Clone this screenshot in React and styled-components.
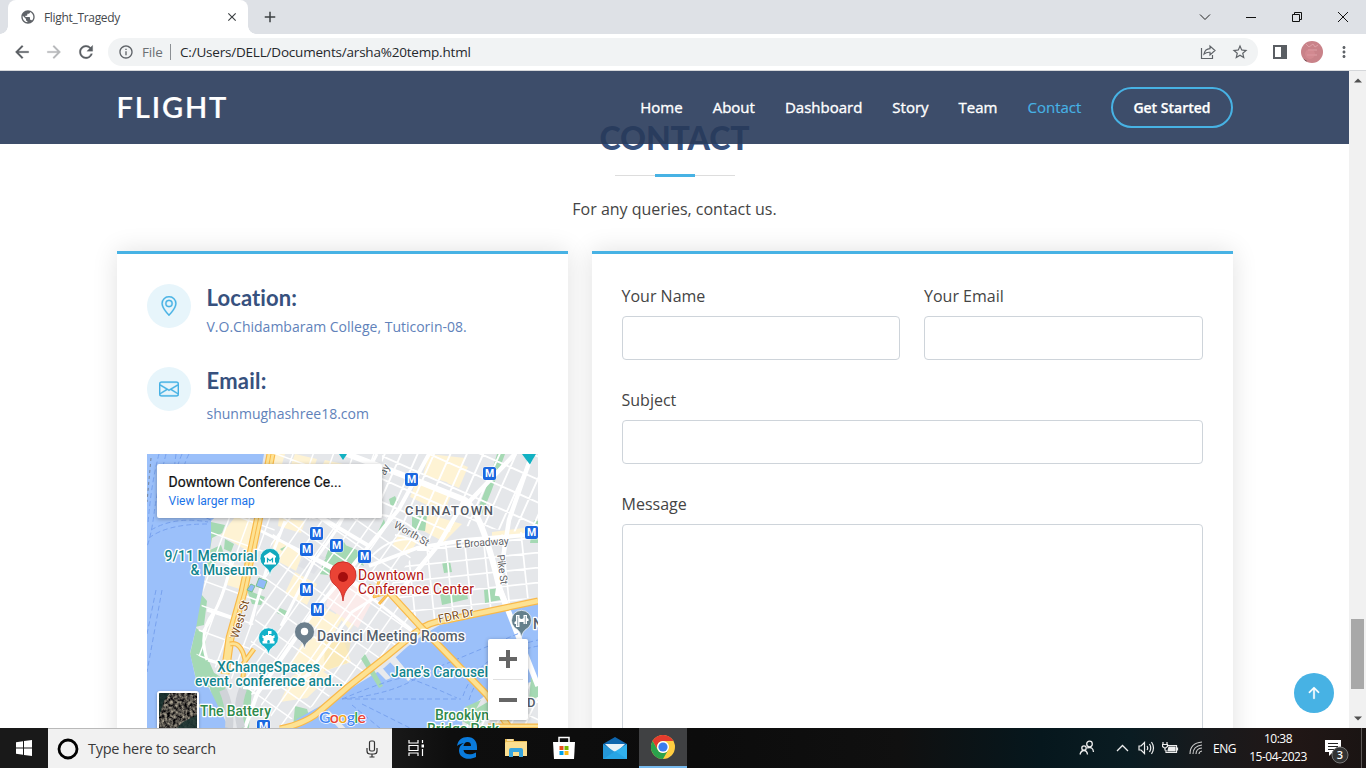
import React from "react";
import styled, { createGlobalStyle } from "styled-components";
import { MdArrowBack, MdArrowForward, MdRefresh, MdPublic, MdStarBorder, MdMoreVert, MdInfoOutline, MdClose, MdAdd } from "react-icons/md";
import { BsGeoAlt, BsEnvelope, BsArrowUpShort } from "react-icons/bs";

const Global = createGlobalStyle`
  * { box-sizing: border-box; }
  body { margin: 0; width: 1366px; height: 768px; overflow: hidden; background: #fff; color: #444; font-family: "Open Sans", "Liberation Sans", sans-serif; }
  svg { display: block; flex: none; }
  h2, h4, p { margin: 0; }
`;

const Screen = styled.div`
  width: 1366px; height: 768px; display: flex; flex-direction: column; overflow: hidden;
`;

/* Browser frame */
const TabStrip = styled.div`
  height: 34px; flex: none; background: #dee1e6; display: flex; align-items: center; padding-left: 8px; color: #3c4043;
`;
const Tab = styled.div`
  position: relative; width: 240px; height: 34px; background: #fff; border-radius: 8px 8px 0 0;
  display: flex; align-items: center; padding: 0 9px 0 12px; font-size: 12px; color: #45494d;
  &::before, &::after { content: ""; position: absolute; bottom: 0; width: 8px; height: 8px; }
  &::before { left: -8px; background: radial-gradient(circle at 0 0, #dee1e6 7.5px, #fff 8px); }
  &::after { right: -8px; background: radial-gradient(circle at 100% 0, #dee1e6 7.5px, #fff 8px); }
`;
const TabTitle = styled.span`
  flex: 1; margin-left: 8px; letter-spacing: -0.32px; white-space: nowrap;
`;
const NewTab = styled.div` margin-left: 13px; `;
const WindowControls = styled.div`
  margin-left: auto; height: 28px; display: flex; align-items: center;
`;
const WindowButton = styled.div`
  width: 46px; display: flex; justify-content: center;
`;
const Toolbar = styled.div`
  height: 37px; flex: none; display: flex; align-items: center; background: #fff; border-bottom: 1px solid #d5d7da; color: #5f6368; padding-left: 12px;
`;
const ToolButton = styled.div`
  width: 32px; color: ${(p) => (p.$faded ? "#b6b8ba" : "#5a5e63")};
  path:not([fill="none"]) { stroke: currentColor; stroke-width: 0.3px; }
`;
const AddressBar = styled.div`
  width: 1150px; height: 28px; border-radius: 14px; background: #f1f3f4; display: flex; align-items: center; padding: 0 9px 0 10px; font-size: 14px; white-space: nowrap;
`;
const Scheme = styled.span`
  margin-left: 8px; width: 28px; padding-right: 8px; color: #6b6f73; letter-spacing: -0.2px; font-size: 13.5px;
`;
const Url = styled.span`
  margin-left: 0; padding-left: 9px; border-left: 1px solid #8c9094; line-height: 16px; color: #25282c; letter-spacing: ${(p) => p.$tracking}px; font-size: 13.5px;
`;
const AddressActions = styled.div`
  margin-left: auto; display: flex; gap: 14px; align-items: center;
`;
const ToolbarEnd = styled.div`
  flex: 1; display: flex; align-items: center; padding-left: 15px;
`;
const Avatar = styled.div`
  width: 22px; height: 22px; margin: 0 12px 0 14px; border-radius: 50%; overflow: hidden;
`;

/* Web page */
const Viewport = styled.div`
  height: 657px; flex: none; display: flex; overflow: hidden; position: relative;
`;
const Page = styled.div`
  width: 1349px; height: 657px; overflow: hidden; background: #fff; padding: 47.6px 116.5px 0;
`;
const SiteHeader = styled.header`
  position: absolute; z-index: 2; left: 0; top: 0; width: 1349px; height: 73px; padding: 0 116.5px;
  display: flex; align-items: center; justify-content: space-between; background: rgba(40, 58, 90, 0.9);
`;
const Logo = styled.div`
  font-family: Lato, sans-serif; font-size: 29px; font-weight: 600; letter-spacing: 1.9px; color: #fff; line-height: 36px; padding-bottom: 2px; -webkit-text-stroke: 0.2px #fff;
`;
const Nav = styled.nav`
  display: flex; align-items: center; gap: 30px;
`;
const NavLink = styled.span`
  font-size: 15px; font-weight: 400; line-height: 20px; padding-bottom: 2px; color: ${(p) => (p.$active ? "#47b2e4" : "#fff")};
  -webkit-text-stroke: ${(p) => (p.$active ? 0.15 : 0.35)}px currentColor;
`;
const GetStarted = styled.span`
  height: 41px; padding: 0 20px; border: 2px solid #47b2e4; border-radius: 50px; color: #fff; font-size: 14px; font-weight: 600; letter-spacing: 0; line-height: 37px; -webkit-text-stroke: 0.25px #fff;
`;
const SectionTitle = styled.div`
  text-align: center; padding-bottom: 30px;
`;
const Heading = styled.h2`
  position: relative; font-family: Lato, sans-serif; font-size: 32px; font-weight: 900; line-height: 38.4px; color: #37517e; letter-spacing: -0.1px; padding-bottom: 20px; margin-bottom: 20px;
  &::before, &::after { content: ""; position: absolute; }
  &::before { width: 120px; height: 1px; background: #ddd; bottom: 1px; left: calc(50% - 60px); }
  &::after { width: 40px; height: 3px; background: #47b2e4; bottom: 0; left: calc(50% - 20px); }
`;
const Intro = styled.p` font-size: 16px; line-height: 24px; `;
const Columns = styled.div`
  display: grid; grid-template-columns: 451px 641px; gap: 24px;
`;
const Card = styled.div`
  height: 560px; padding: 30px; background: #fff; border-top: 3px solid #47b2e4; box-shadow: 0 0 24px rgba(0, 0, 0, 0.12);
`;
const InfoItem = styled.div`
  display: flex; gap: 16px; height: ${(p) => p.$height}px;
`;
const InfoIcon = styled.div`
  width: 44px; height: 44px; border-radius: 50%; background: #e7f5fb; color: #47b2e4; display: flex; align-items: center; justify-content: center;
  path { stroke: currentColor; stroke-width: 0.25px; }
`;
const InfoTitle = styled.h4`
  font-family: Lato, sans-serif; font-size: 22px; font-weight: 700; line-height: 26.4px; padding-top: 1px; color: #37517e; letter-spacing: ${(p) => p.$tracking}px;
`;
const InfoText = styled.p`
  margin-top: ${(p) => p.$top}px; font-size: 14px; line-height: 21px; color: #6182ba;
`;
const Form = styled.div` display: flex; flex-direction: column; gap: 28px; `;
const FieldRow = styled.div` display: grid; grid-template-columns: 1fr 1fr; gap: 24px; `;
const Field = styled.label` display: block; font-size: 16px; line-height: 24px; `;
const Input = styled.div`
  height: ${(p) => p.$height || 44}px; margin-top: 8px; border: 1px solid #ced4da; border-radius: 4px; background: #fff;
`;
const BackToTop = styled.div`
  position: absolute; z-index: 3; left: 1294px; top: 602px; width: 40px; height: 40px; border-radius: 50%; background: #47b2e4; color: #fff; display: flex; align-items: center; justify-content: center;
  path { stroke: currentColor; stroke-width: 0.2px; }
`;
const Scrollbar = styled.div`
  width: 17px; height: 657px; background: #f1f1f1; display: flex; flex-direction: column; align-items: center; justify-content: space-between; padding: 7px 0 7px;
`;
const ScrollThumb = styled.div` width: 13px; height: 70px; margin-top: 536px; background: #a8a8a8; `;
const ScrollEnds = styled.div` flex: 1; display: flex; align-items: flex-end; `;

/* Map */
const MapFrame = styled.div`
  position: relative; width: 391px; height: 290px; overflow: hidden; background: #e8eaed;
`;
const PlaceCard = styled.div`
  position: absolute; left: 10px; top: 10px; width: 225px; height: 54px; padding: 9px 12px; background: #fff; border-radius: 2px; box-shadow: 0 1px 4px rgba(0, 0, 0, 0.3); font-family: Roboto, sans-serif;
`;
const PlaceName = styled.div` font-size: 14px; font-weight: 400; line-height: 19px; color: #111; white-space: nowrap; letter-spacing: ${(p) => p.$tracking}px; -webkit-text-stroke: 0.2px #111; `;
const PlaceLink = styled.div` font-size: 12px; line-height: 18px; color: #1a73e8; `;
const ZoomControl = styled.div`
  position: absolute; left: 341px; top: 185px; width: 40px; height: 81px; background: #fff; border-radius: 2px; box-shadow: 0 1px 4px rgba(0, 0, 0, 0.3); display: flex; flex-direction: column; align-items: center;
`;
const ZoomButton = styled.div` height: 40px; display: flex; align-items: center; `;
const ZoomDivider = styled.div` width: 30px; height: 1px; background: #e0e0e0; `;
const Satellite = styled.div`
  position: absolute; left: 10px; top: 237px; width: 42px; height: 42px; border: 2px solid #fff; border-radius: 3px; overflow: hidden; box-shadow: 0 1px 3px rgba(0, 0, 0, 0.3);
`;

const halo = { stroke: "#fff", strokeWidth: 2.6, paintOrder: "stroke", strokeLinejoin: "round" };
function MapLabel({ x, y, w, color, size = 14, anchor, rotate, weight = 500, soft, children }) {
  return (
    <text x={x} y={y} fill={color} fontFamily="Roboto, sans-serif" fontSize={size} fontWeight={weight} textAnchor={anchor}
      textLength={w} transform={rotate ? `rotate(${rotate} ${x} ${y})` : undefined} {...halo} strokeWidth={soft ? 1.6 : 2.6}>
      {children}
    </text>
  );
}
function Metro({ x, y }) {
  return (
    <g transform={`translate(${x + 0.5} ${y + 0.5})`}>
      <rect x="-7" y="-7" width="14" height="14" rx="2" fill="#fff" opacity=".7" />
      <rect x="-6.5" y="-6.5" width="13" height="13" rx="2" fill="#1a67e0" />
      <text x="0" y="3.8" textAnchor="middle" fill="#fff" fontFamily="Roboto, sans-serif" fontWeight="700" fontSize="10.5">M</text>
    </g>
  );
}
function Pin({ x, y, color, children }) {
  return (
    <g transform={`translate(${x} ${y})`}>
      <path d="M0 17C-1 11-3.500 9.500-7 7A10 10 0 1 1 7 7C3.500 9.500 1 11 0 17Z" fill={color} stroke="#fff" strokeWidth=".7" />
      {children}
    </g>
  );
}
function Streets({ clip, angle, cx, cy, dx, dy, width = 2, extent = 200 }) {
  const lines = [];
  for (let t = -extent; t <= extent; t += dx) lines.push(`M${t} ${-extent}V${extent}`);
  for (let t = -extent; t <= extent; t += dy) lines.push(`M${-extent} ${t}H${extent}`);
  return (
    <g clipPath={`url(#${clip})`}>
      <path d={lines.join("")} transform={`translate(${cx} ${cy}) rotate(${angle})`} stroke="#fff" strokeWidth={width} fill="none" />
    </g>
  );
}
function Highway({ d, width = 7 }) {
  return (
    <g fill="none" strokeLinejoin="round">
      <path d={d} stroke="#f9b94a" strokeWidth={width} />
      <path d={d} stroke="#fde293" strokeWidth={width - 2.4} />
    </g>
  );
}

function CityMap() {
  const teal = "#12858e", green = "#2f8a4c", gray = "#55606c", brown = "#7a4a12", red = "#b31412";
  return (
    <svg width="391" height="290" viewBox="0 0 391 290">
      <defs>
        <clipPath id="north"><path d="M235 0H391V80L318 72L275 88L235 64Z" /></clipPath>
        <clipPath id="center"><path d="M130 60L235 60L275 88L240 136L273 174L193 236L133 272L95 230Z" /></clipPath>
        <clipPath id="west"><path d="M117 0H235V64L130 66L110 150L95 232L49 200L64 70Z" /></clipPath>
        <clipPath id="east"><path d="M275 90L391 76V142L293 166L273 170L240 136Z" /></clipPath>
        <clipPath id="brooklyn"><path d="M320 252L345 232L391 222V290H315Z" /></clipPath>
      </defs>
      <rect width="391" height="290" fill="#e5e7ea" />

      {/* commercial blocks */}
      <g fill="#fef3d4">
        <path d="M124 0h14l-7 24h-12zM148 0l22 5-5 15-22-7zM178 6l18 4-4 12-19-6zM282 0l36 4-12 26-30-9zM271 24l34 15-8 20-34-16zM280 60l35 10-18 18-24-13zM345 78l46-6v10l-46 4zM309 8l12 5-9 21-12-5z" />
        <path d="M88 63l24 3-8 33-30-18zM84 110l18 4-6 22-16-5zM132 64l26 3-4 12-23-7zM128 84l28 15-7 18-26-14zM148 118l22 12-10 21-22-12zM170 150l26 14-12 20-24-16zM158 184l36-6 10 30-40 14-24-6zM145 222l24-9 14 9-23 22-27 4zM200 142l16 16-13 18-14-16zM252 80l18 8-8 12-17-8z" />
      </g>
      <path d="M178 182l26 4-4 23-23 8z" fill="#f7e5ae" opacity=".65" />

      {/* parks and campuses */}
      <g fill="#a5d9b3">
        <path d="M350 0h8l-14 38-9 22-5-3 11-28zM265 62h15l-2 15-13-2zM242 45l6-3 3 6-7 5zM229 82l8-17 2 8-8 9zM196 90l14 6 7 16-18-8zM182 94l15-6 12 20-20 14-17-2zM295 108l8-1 2 11-8 1zM293 140l26-5 2 10-26 6zM337 136l16-2 5 11-20 4zM387 66l4 1v22h-8z" />
        <path d="M64 68l14 3-3 8-10 5-2 12 11-5 3 9-18 18-5-4zM78 85l9 5-3 8-7-3zM100 136l18 7-4 8-9-1zM133 154l9 4-3 5-9-4zM54 140l6 7-3 24-9 2zM49 174l10 7-1 17 13 30-11 6-11-9-6-25zM60 214l18 12 2 28-9 9-8-28zM96 232l9 1-3 41H90zM148 252l12 3 5 16-19 3zM133 95l6-3-4 5z" />
      </g>
      <path d="M188 112l38 34-15 28-32-22z" fill="#fbebea" />
      <path d="M163 96l16 8-12 16-16-8z" fill="#dfe1e6" />

      <Streets clip="north" angle={24} cx={300} cy={20} dx={15} dy={21} width={1.9} />
      <Streets clip="center" angle={35} cx={190} cy={150} dx={14} dy={20} width={1.5} />
      <Streets clip="west" angle={20} cx={100} cy={100} dx={19} dy={24} width={1.5} />
      <Streets clip="east" angle={-6} cx={330} cy={110} dx={19} dy={15} width={1.700} />
      <Streets clip="brooklyn" angle={25} cx={360} cy={260} dx={13} dy={16} width={1.700} />

      {/* main streets */}
      <g fill="none" stroke="#fff" strokeLinejoin="round">
        <path d="M200 0L253 20L318 46Q335 58 353 136" strokeWidth="6" />
        <path d="M353 136L391 232" strokeWidth="6" />
        <path d="M385 0L362 66L350 142M318 46L292 90L246 146M368 0L318 52" strokeWidth="4.500" />
        <path d="M391 80L318 86L270 94L222 112M282 0L252 55L222 92L198 121L165 160L110 240L98 274M222 92L170 61" strokeWidth="4" />
        <path d="M230 0L190 75L166 109L134 172M112 76L184 112L240 156L265 176M60 156L91 166M136 88L224 137M61 206L95 216M96 234H130L164 220" strokeWidth="3" />
        <path d="M56 178Q79 143 84 106M60 206Q51 178 67 158M138 67L119 117L103 171M155 228L205 158L240 136" strokeWidth="3" />
        <path d="M222 60Q260 60 278 88Q246 78 223 104M248 81Q266 83 283 98" strokeWidth="1.800" />
      </g>

      {/* harbor and river */}
      <path d="M0 0H117L112 29L83 49L64 67V88L55 140L49 174L43 199L49 226L62 234L82 274V290H0Z" fill="#9bc0fa" />
      <path d="M391 149L293 171L276 181L260 193L237 214L193 241L150 265L133 290H318L315 268L324 253L340 240L391 226Z" fill="#9bc0fa" />
      <path d="M246 200l20 24-5 3-20-21zM232 210l12 14-5 2-12-12z" fill="#e8eaed" />
      <path d="M218 200l18 32-4 2-18-29z" fill="#a5d9b3" />
      <path d="M318 253l16-7-12 22zM312 265l32-19 7 8-24 20zM384 224h7v19l-9 3zM342 238l12-4 6 10-14 4z" fill="#a5d9b3" />
      <path d="M353 136L391 232" stroke="#fff" strokeWidth="5.500" />
      <path d="M180 258L210 290" stroke="#e8eaed" strokeWidth="5" />
      <g fill="none" stroke="#78a2ef" strokeWidth="1" strokeDasharray="5 3">
        <path d="M12 0Q4 30 1 70M19 0Q10 36 7 60T-2 98M29 0L23 48L64 66M35 0Q18 40 38 53L70 62M42 0Q28 26 48 43L66 61M4 76Q28 62 61 68M2 84Q20 70 60 70M15 136L0 218M9 136L0 180" />
        <path d="M195 245Q250 222 260 224T310 244M195 245Q250 240 277 219L375 178M200 245H314M316 242Q330 200 391 186M322 246Q335 203 391 192M205 251L240 280M215 250L275 280" />
      </g>
      <path d="M4 4L0 48" stroke="#75849b" strokeWidth="1" strokeDasharray="3 3" fill="none" />

      {/* highways */}
      <path d="M76 236Q84 254 82 274M96 235Q89 252 94 274" fill="none" stroke="#d0d3d8" strokeWidth="8" />
      <Highway d="M124 0L111 67L96 138L83 184L78 220" width={9} />
      <path d="M124 0L111 67L96 138L83 184" fill="none" stroke="#f9b94a" strokeWidth="1" />
      <Highway d="M83 190Q94 187 98 206L95 231M96 210L107 195" width={5} />
      <Highway d="M133 275Q160 269 173 257L202 232L240 202L268 179Q280 168 300 166L391 147" />
      <Highway d="M240 136L273 172L340 241L368 282" />
      <Highway d="M341 272H391" width={5} />
      <Highway d="M222 131l18 10-8 9M232 127l-5 16 10-3" width={2.8} />

      {/* memorial pools */}
      <g fill="#91baf8" stroke="#7ac28f" strokeWidth="1"><path d="M112 124l8 3-3 8-8-3zM104 130l4 2-3 6-5-2z" /></g>

      <MapLabel x={110.500} y={107} w={93} anchor="end" color={teal}>9/11 Memorial</MapLabel>
      <MapLabel x={110.500} y={121} w={67} anchor="end" color={teal}>&amp; Museum</MapLabel>
      <MapLabel x={258} y={61} w={88} color="#535a64" size={13}>CHINATOWN</MapLabel>
      <MapLabel x={246} y={73} w={39} color="#5f6368" size={10.500} weight={400} rotate={30} soft>Worth St</MapLabel>
      <MapLabel x={309} y={94} w={53} color="#5f6368" size={10.500} weight={400} rotate={-4} soft>E Broadway</MapLabel>
      <MapLabel x={350} y={101} w={30} color="#5f6368" size={10.500} weight={400} rotate={83} soft>Pike St</MapLabel>
      <MapLabel x={238} y={22} color="#5f6368" size={10.500} weight={400} rotate={-62} soft>ay</MapLabel>
      <MapLabel x={91} y={185} w={39} color={brown} size={11.500} weight={400} rotate={-73} soft>West St</MapLabel>
      <MapLabel x={292} y={169} w={36} color={brown} size={11.500} weight={400} rotate={-12} soft>FDR Dr</MapLabel>
      <MapLabel x={70} y={218} w={103} color={teal}>XChangeSpaces</MapLabel>
      <MapLabel x={48} y={232} w={148} color={teal}>event, conference and...</MapLabel>
      <MapLabel x={170} y={187} w={148} color={gray}>Davinci Meeting Rooms</MapLabel>
      <MapLabel x={244} y={223} w={97} color={teal}>Jane's Carousel</MapLabel>
      <MapLabel x={53} y={262} w={71} color={green}>The Battery</MapLabel>
      <MapLabel x={288} y={266} w={54} color={green}>Brooklyn</MapLabel>
      <MapLabel x={280} y={280} w={72} color={green}>Bridge Park</MapLabel>
      <MapLabel x={386} y={175} color={gray}>N</MapLabel>
      <MapLabel x={380} y={253} color={gray} size={13}>D</MapLabel>

      {[[264, 25], [342, 19], [384, 78], [169, 79], [159, 95], [189, 91], [217, 102], [159, 135], [170, 155], [116, 272]].map(([x, y]) => (
        <Metro key={`${x}-${y}`} x={x} y={y} />
      ))}
      <path d="M192 0h8l-4 6zM375 0h14l-3 5-3 5.500-4-5z" fill="#12b1c2" />
      <Pin x={123} y={104.500} color="#12a9bd">
        <path d="M-6-2.500L0-6.500L6-2.500V-1H-6ZM-5-1h10v6H-5zM-6 4H6v2H-6z" fill="#fff" />
        <path d="M-2.500 4V0L0 2.200L2.500 0V4" fill="none" stroke="#12a9bd" strokeWidth="1.200" />
      </Pin>
      <Pin x={121.500} y={184} color="#12b1c9">
        <path d="M-.500-7H3v3H.500v1H3v1h2v-1h1v3H5v3h1v2.500H-6V3h1V0h-1v-3h1v1h2v-1h2.500z" fill="#fff" />
        <path d="M-1.200 5.500V3.200a1.200 1.200 0 0 1 2.400 0V5.500z" fill="#12b1c9" />
      </Pin>
      <Pin x={157.500} y={178} color="#6c7f8d"><circle r="3.700" cy="-.5" fill="#fff" /></Pin>
      <Pin x={374.500} y={166.500} color="#65808c">
        <path d="M-5.500-5.500h3.500v3q2 2 4 0v-3h3.500v3l1.500 1v2h-1.500v3H2V1.500h-4V6.500h-3.500v-3H-7v-2l1.500-1z" fill="#fff" />
        <path d="M-3.800-4.500V5.500M3.800-4.500V5.500" stroke="#65808c" strokeWidth=".7" />
      </Pin>
      <g transform="translate(196 123)">
        <path d="M0 24C-1 15-4 12-8 8A13 13 0 1 1 8 8C4 12 1 15 0 24Z" fill="#ea4335" stroke="#c5221f" strokeWidth=".8" />
        <circle r="5" fill="#a50e0e" />
      </g>
      <MapLabel x={211} y={126} w={66} color={red} weight={400}>Downtown</MapLabel>
      <MapLabel x={211} y={140} w={116} color={red} weight={400}>Conference Center</MapLabel>
      <text x="172" y="269" fontFamily="Lato, sans-serif" fontSize="16" fontWeight="600" textLength="47" {...halo} strokeWidth="1.500">
        <tspan fill="#4285f4">G</tspan><tspan fill="#ea4335">o</tspan><tspan fill="#f2ab1b">o</tspan><tspan fill="#4285f4">g</tspan><tspan fill="#34a853">l</tspan><tspan fill="#ea4335">e</tspan>
      </text>
    </svg>
  );
}

function SatelliteTexture() {
  return (
    <svg width="38" height="38">
      <filter id="aerial" colorInterpolationFilters="sRGB">
        <feTurbulence type="fractalNoise" baseFrequency=".35" numOctaves="3" seed="4" />
        <feColorMatrix values="1.200 0 0 0 -.28 1.150 0 0 0 -.27 1 0 0 0 -.22 0 0 0 0 1" />
      </filter>
      <rect width="38" height="38" filter="url(#aerial)" />
      <path d="M0 0H11L5 8L0 24Z" fill="#16302c" opacity=".9" /><path d="M38 22L24 29L15 38H38Z" fill="#1b3431" opacity=".85" />
    </svg>
  );
}

/* Desktop taskbar */
const Taskbar = styled.div`
  height: 40px; flex: none; display: flex; align-items: center; color: #fff;
  background: linear-gradient(90deg, #191919 0, #191919 390px, #0e0e0e 450px, #0c0c0c 700px, #101010 900px, #06171d 1040px, #0a1c22 1130px, #171a1d 1200px, #211716 1290px, #1a1413 1366px);
`;
const TaskButton = styled.div`
  width: ${(p) => p.$width || 49}px; height: 40px; display: flex; align-items: center; justify-content: center;
  background: ${(p) => (p.$active ? "#404143" : "transparent")}; border-bottom: ${(p) => (p.$active ? "2px solid #76b9ed" : "0")};
`;
const SearchBox = styled.div`
  width: 344px; height: 40px; background: #f1f1f1; border-top: 1px solid #b9b9b9; display: flex; align-items: center; padding: 0 14px 0 9px; color: #3a3a3a; font-size: 14.500px;
`;
const SearchText = styled.span` margin-left: 9px; flex: 1; letter-spacing: ${(p) => p.$tracking}px; white-space: nowrap; `;
const Tray = styled.div` margin-left: auto; width: 287px; height: 40px; display: flex; align-items: center; font-size: 12px; `;
const TrayIcons = styled.div` display: flex; align-items: center; width: 134px; flex: none; `;
const TraySlot = styled.div` width: ${(p) => p.$width}px; flex: none; `;
const Language = styled.span` width: 35px; flex: none; letter-spacing: -0.5px; `;
const Clock = styled.div` width: 60px; flex: none; text-align: center; line-height: 18px; letter-spacing: -0.5px; white-space: nowrap; `;
const Notices = styled.div` margin-left: 16px; height: 40px; padding-top: 10px; width: 30px; flex: none; `;
const DesktopEdge = styled.div` width: 1px; height: 40px; background: #5c5756; margin-left: auto; margin-right: 4px; `;

export default function App() {
  return (
    <Screen>
      <Global />
      <TabStrip>
        <Tab>
          <MdPublic size={16} color="#5f6368" />
          <TabTitle>Flight_Tragedy</TabTitle>
          <MdClose size={14} color="#3c4043" />
        </Tab>
        <NewTab><MdAdd size={18} color="#3c4043" /></NewTab>
        <WindowControls>
          <WindowButton><svg width="12" height="8" fill="none" stroke="#222"><path d="M1 1.500L6 6.500L11 1.500" /></svg></WindowButton>
          <WindowButton><svg width="10" height="3"><path d="M0 1.500H10" stroke="#111" /></svg></WindowButton>
          <WindowButton><svg width="10" height="10" fill="none" stroke="#111"><path d="M.5 2.500H7.500V9.500H.5ZM2.500 2V.5H9.500V7.500H8" /></svg></WindowButton>
          <WindowButton><svg width="12" height="12" fill="none" stroke="#111"><path d="M1 1L11 11M11 1L1 11" /></svg></WindowButton>
        </WindowControls>
      </TabStrip>
      <Toolbar>
        <ToolButton><MdArrowBack size={20} /></ToolButton>
        <ToolButton $faded><MdArrowForward size={20} /></ToolButton>
        <ToolButton><MdRefresh size={20} /></ToolButton>
        <AddressBar>
          <MdInfoOutline size={16} />
          <Scheme>File</Scheme>
          <Url $tracking={-0.2}>C:/Users/DELL/Documents/arsha%20temp.html</Url>
          <AddressActions>
            <svg width="18" height="16" fill="none" stroke="#5f6368" strokeWidth="1.2"><path d="M2.500 4V14.500H13.500V11M5 10Q6 5 11 4.700V2L16 6.500L11 11V8.300Q7.500 8 5 10Z" /></svg>
            <MdStarBorder size={18} />
          </AddressActions>
        </AddressBar>
        <ToolbarEnd>
          <svg width="14" height="14"><path d="M1 1H13V13H1ZM9 1V13" fill="none" stroke="#5a5e63" strokeWidth="2" /><path d="M9 1h4v12H9z" fill="#5a5e63" /></svg>
          <Avatar>
            <svg width="22" height="22"><rect width="22" height="22" fill="#c98289" /><path d="M5 3l3 3 4-3 2 3 3-2M7 9h9M6 14h10" stroke="#dda0a6" fill="none" /><circle cx="9" cy="13" r="5" fill="#dc9098" opacity=".5" /><path d="M1 17L6 20L4 22H0Z" fill="#543438" /></svg>
          </Avatar>
          <MdMoreVert size={18} />
        </ToolbarEnd>
      </Toolbar>

      <Viewport>
        <SiteHeader>
          <Logo>FLIGHT</Logo>
          <Nav>
            {["Home", "About", "Dashboard", "Story", "Team", "Contact"].map((item) => (
              <NavLink key={item} $active={item === "Contact"}>{item}</NavLink>
            ))}
            <GetStarted>Get Started</GetStarted>
          </Nav>
        </SiteHeader>
        <Page>
          <SectionTitle>
            <Heading>CONTACT</Heading>
            <Intro>For any queries, contact us.</Intro>
          </SectionTitle>
          <Columns>
            <Card>
              <InfoItem $height={83}>
                <InfoIcon><BsGeoAlt size={20} /></InfoIcon>
                <div>
                  <InfoTitle $tracking={0.1}>Location:</InfoTitle>
                  <InfoText $top={5}>V.O.Chidambaram College, Tuticorin-08.</InfoText>
                </div>
              </InfoItem>
              <InfoItem $height={87}>
                <InfoIcon><BsEnvelope size={20} /></InfoIcon>
                <div>
                  <InfoTitle $tracking={0.25}>Email:</InfoTitle>
                  <InfoText $top={9}>shunmughashree18.com</InfoText>
                </div>
              </InfoItem>
              <MapFrame>
                <CityMap />
                <PlaceCard>
                  <PlaceName $tracking={0.03}>Downtown Conference Ce...</PlaceName>
                  <PlaceLink>View larger map</PlaceLink>
                </PlaceCard>
                <Satellite><SatelliteTexture /></Satellite>
                <ZoomControl>
                  <ZoomButton><svg width="18" height="18"><path d="M9 0V18M0 9H18" stroke="#666" strokeWidth="4" /></svg></ZoomButton>
                  <ZoomDivider />
                  <ZoomButton><svg width="18" height="4"><path d="M0 2H18" stroke="#666" strokeWidth="4" /></svg></ZoomButton>
                </ZoomControl>
              </MapFrame>
            </Card>
            <Card>
              <Form>
                <FieldRow>
                  <Field>Your Name<Input /></Field>
                  <Field>Your Email<Input /></Field>
                </FieldRow>
                <Field>Subject<Input /></Field>
                <Field>Message<Input $height={260} /></Field>
              </Form>
            </Card>
          </Columns>
        </Page>
        <BackToTop><BsArrowUpShort size={24} /></BackToTop>
        <Scrollbar>
          <svg width="8" height="5"><path d="M0 4.500L4 .5L8 4.500Z" fill="#505050" /></svg>
          <ScrollThumb />
          <ScrollEnds><svg width="8" height="5"><path d="M0 .5L4 4.500L8 .5Z" fill="#505050" /></svg></ScrollEnds>
        </Scrollbar>
      </Viewport>

      <Taskbar>
        <TaskButton $width={48}>
          <svg width="16" height="16" fill="#fff"><path d="M0 2.300L7 1.300V7.500H0ZM8 1.100L16 0V7.500H8ZM0 8.500H7V14.700L0 13.700ZM8 8.500H16V16L8 14.900Z" /></svg>
        </TaskButton>
        <SearchBox>
          <svg width="22" height="22"><circle cx="11" cy="11" r="9" fill="none" stroke="#000" strokeWidth="2.800" /></svg>
          <SearchText $tracking={-0.3}>Type here to search</SearchText>
          <svg width="12" height="18" fill="none" stroke="#333" strokeWidth="1.200"><rect x="3.500" y="1" width="5" height="10" rx="1.500" /><path d="M1 8V11Q1 14 4 14H8Q11 14 11 11V8M6 14V17M3.500 17H8.500" /></svg>
        </SearchBox>
        <TaskButton>
          <svg width="17" height="16" fill="none" stroke="#fff" strokeWidth="1.200"><path d="M1 0V3H10V0M1 16V13H10V16M1 5.500H10V10.500H1ZM14.500 0V3M14.500 9V16" /><path d="M13.500 4.500H16V7.500H13.500Z" fill="#fff" stroke="none" /></svg>
        </TaskButton>
        <TaskButton $width={52}>
          <svg width="22" height="22" viewBox="0 0 22 22"><path d="M1 9C2 3 6 0 11.500 0C18 0 21 4.500 21 10V13H7.500C8 18 14.500 18.500 20 15.500V20C12 24 3 21 3 13.500C3 10 5 7.500 8 6C5 6.500 2.500 7.500 1 9ZM7.500 9H15C15 6.500 14 5 11.500 5C9 5 8 7 7.500 9Z" fill="#0a7bdc" /></svg>
        </TaskButton>
        <TaskButton $width={45}>
          <svg width="22" height="20"><path d="M0 1H9V3H22V18H0Z" fill="#e9bd55" /><path d="M1 4H22V18H0V5Z" fill="#fbdf90" /><path d="M4 19V12Q4 10 6 10H16Q18 10 18 12V19H14V14H8V19Z" fill="#37a5de" /><path d="M2 2h6" stroke="#fff" /></svg>
        </TaskButton>
        <TaskButton $width={52}>
          <svg width="24" height="24"><path d="M7 7V1.500H17V7" fill="none" stroke="#fff" strokeWidth="1.500" /><path d="M1 6H23L22 23H2Z" fill="#fff" /><path d="M7.500 10H11.500V14H7.500Z" fill="#e84e1b" /><path d="M12.500 10H16.500V14H12.500Z" fill="#7ab800" /><path d="M7.500 15H11.500V19H7.500Z" fill="#00a1e8" /><path d="M12.500 15H16.500V19H12.500Z" fill="#fcb813" /></svg>
        </TaskButton>
        <TaskButton>
          <svg width="24" height="22"><path d="M0 7L12 0L24 7V22H0Z" fill="#0e66ae" /><path d="M2 7H22L12 17Z" fill="#e8f2f8" /><path d="M0 7L12 15L0 22Z" fill="#2597d8" /><path d="M24 7L0 22H24Z" fill="#30b1ee" /><path d="M12 14L24 22H0Z" fill="#229cdf" opacity=".6" /></svg>
        </TaskButton>
        <TaskButton $width={48} $active>
          <svg width="24" height="24" viewBox="0 0 24 24"><circle cx="12" cy="12" r="12" fill="#ffcd40" /><path d="M1.600 6A12 12 0 0 1 22.400 6H12A6 6 0 0 0 6.800 15Z" fill="#e33b2e" /><path d="M1.600 6A12 12 0 0 0 12 24L17.200 15A6 6 0 0 1 6.800 15Z" fill="#2ba24c" /><circle cx="12" cy="12" r="6" fill="#fff" /><circle cx="12" cy="12" r="4.600" fill="#3b7ded" /></svg>
        </TaskButton>
        <Tray>
          <TrayIcons>
            <TraySlot $width={37}><svg width="16" height="16" fill="none" stroke="#eee" strokeWidth="1.300"><circle cx="10.500" cy="4" r="2.800" /><circle cx="5" cy="8" r="2.200" /><path d="M1 14.500Q2 10.500 5 10.500T8.500 14.500M8 8Q14 6 14.500 12" /></svg></TraySlot>
            <TraySlot $width={22}><svg width="13" height="8" fill="none" stroke="#eee" strokeWidth="1.300"><path d="M1 7L6.500 1.500L12 7" /></svg></TraySlot>
            <TraySlot $width={24}><svg width="17" height="16" fill="none" stroke="#eee" strokeWidth="1.200"><path d="M1 6H3L6.500 2.500V13.500L3 10H1ZM9 6Q10.500 8 9 10M11.500 4Q14 8 11.500 12M13.500 2Q17.500 8 13.500 14" /></svg></TraySlot>
            <TraySlot $width={27}><svg width="17" height="14" fill="none" stroke="#eee" strokeWidth="1.200"><path d="M5 4.500H14.500V11.500H4V9M15.500 6.500V9.500M1 1V3M5 1V3M.500 3.500H5.500V5.500L3.500 7H2.500L.500 5.500ZM3 7V9.500" /><path d="M7 6h6v4H6z" fill="#eee" /></svg></TraySlot>
            <TraySlot $width={14}><svg width="14" height="14" fill="none" stroke="#ccc" strokeWidth="1.100"><path d="M1 13Q1 2 13 1M4 13Q4 5 13 4M7 13Q7 7.500 13 7M10 13Q10 10.500 13 10" /></svg></TraySlot>
          </TrayIcons>
          <Language>ENG</Language>
          <Clock>10:38<br />15-04-2023</Clock>
          <Notices>
            <svg width="28" height="28"><path d="M1 2H17V14H9L5 18V14H1Z" fill="#fff" /><path d="M4 5.500H14M4 8.500H14M4 11.500H10" stroke="#222" /><circle cx="16" cy="17" r="8" fill="#333" stroke="#777" /><text x="16" y="21" textAnchor="middle" fill="#fff" fontSize="11" fontWeight="600">3</text></svg>
          </Notices>
          <DesktopEdge />
        </Tray>
      </Taskbar>
    </Screen>
  );
}
